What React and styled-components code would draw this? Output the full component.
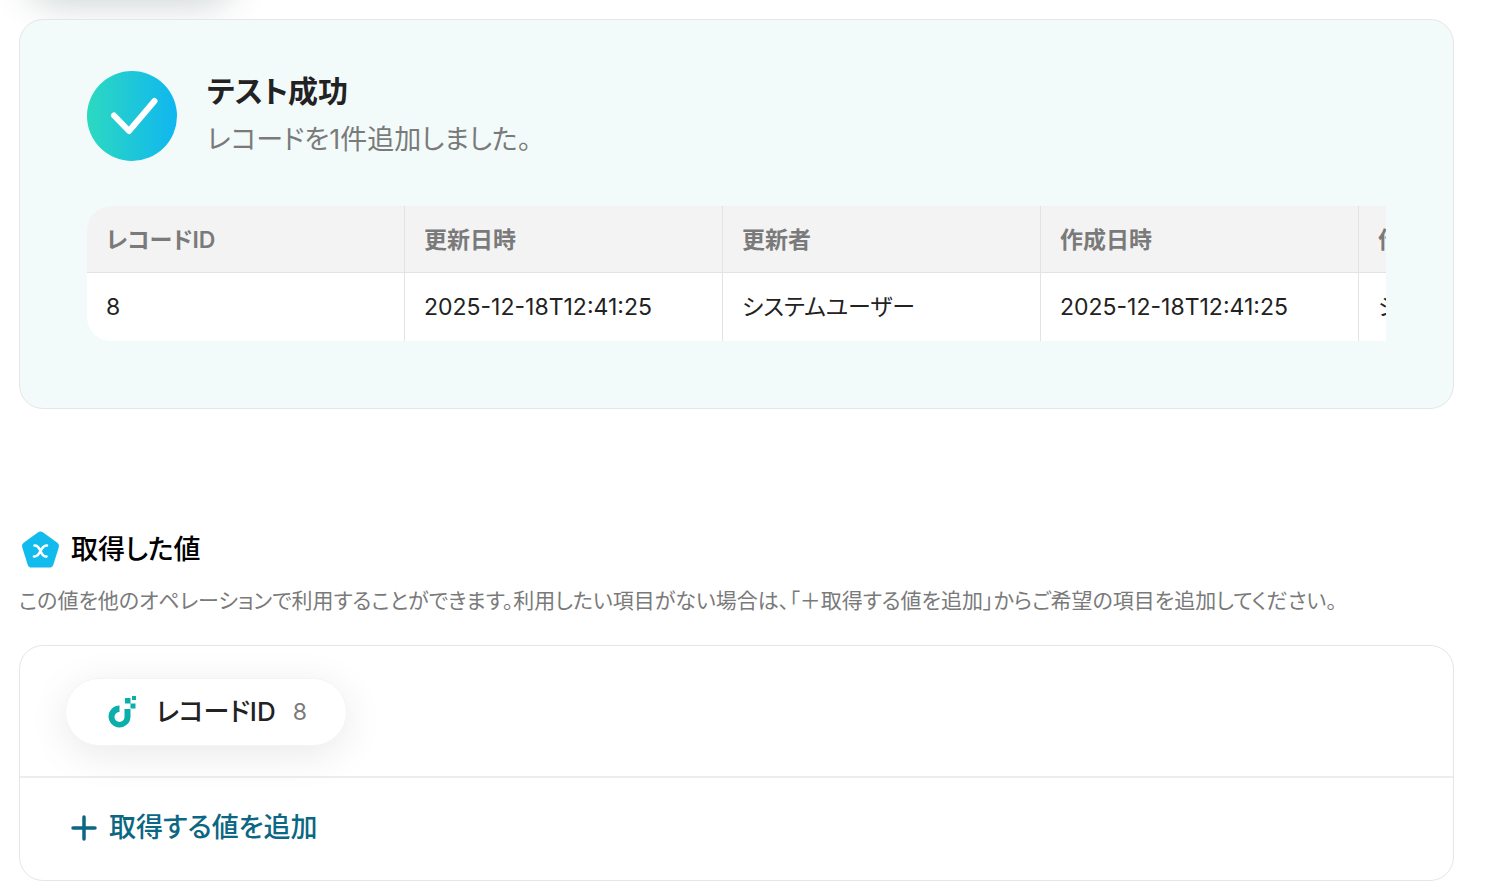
import React from 'react'
import styled, { createGlobalStyle, css } from 'styled-components'

const GlobalStyle = createGlobalStyle`
  *, *::before {
    box-sizing: border-box;
  }
  body {
    margin: 0;
    background: #fff;
    color: #222;
    font-family: Inter, "Noto Sans CJK JP", sans-serif;
    font-feature-settings: "palt";
    -webkit-font-smoothing: antialiased;
    overflow-x: hidden;
  }
`

const Page = styled.main`
  position: relative;
  overflow: hidden;
  padding: 19px 32px 12px 19px;
  /* pill scrolled off above the result card */
  &::before {
    content: '';
    position: absolute;
    top: -68px;
    left: 26px;
    width: 208px;
    height: 64px;
    border-radius: 32px;
    box-shadow: 0 8px 36px rgba(40, 70, 76, 0.24);
  }
`

const card = css`
  border: 1px solid #e6e6e6;
  border-radius: 24px;
`

const Result = styled.section`
  ${card}
  position: relative;
  padding: 47px 67px 67px;
  background: #f2fbfa;
`

const Status = styled.header`
  display: flex;
  align-items: center;
  gap: 30px;
  margin-bottom: 41px;
`

const StatusIcon = styled.svg`
  flex: none;
  width: 90px;
  height: 90px;
`

const Title = styled.h2`
  margin: 0;
  font-size: 30px;
  line-height: 48px;
  font-weight: 600;
`

const Message = styled.p`
  margin: 0;
  font-size: 27px;
  line-height: 50px;
  color: #7a7a7a;
`

const Scroller = styled.div`
  overflow: hidden;
  border-radius: 24px 0 0 24px;
`

const Table = styled.table`
  width: 1590px;
  table-layout: fixed;
  border-spacing: 0;
  background: #fff;
  font-size: 23px;
  line-height: 32px;
  text-align: left;
  white-space: nowrap;
  th, td {
    padding: 18px 19px;
    border-right: 1px solid #e3e3e3;
  }
  th {
    padding: 18px 19px 16px;
    background: #f3f3f3;
    border-bottom: 1px solid #e3e3e3;
    color: #7a7a7a;
    font-weight: 600;
  }
`

const Values = styled.section`
  margin-top: 121px;
`

const Heading = styled.h3`
  display: flex;
  align-items: center;
  gap: 10px;
  margin: 0;
  padding-left: 2px;
  font-size: 27px;
  line-height: 40px;
  font-weight: 500;
  color: #000;
`

const Description = styled.p`
  margin: 15px 0 28px;
  font-size: 21px;
  line-height: 32px;
  color: #7a7a7a;
`

const Panel = styled.div`
  ${card}
  overflow: hidden;
`

const Chips = styled.div`
  display: flex;
  padding: 32px 45px 30px;
  border-bottom: 2px solid #ededed;
`

const Chip = styled.button`
  display: flex;
  align-items: center;
  height: 68px;
  padding: 0 39px 0 42px;
  border: 1px solid #f4f4f4;
  border-radius: 34px;
  background: #fff;
  box-shadow: 0 8px 40px rgba(0, 0, 0, 0.09);
  color: #222;
  font: inherit;
  font-size: 26px;
  line-height: 40px;
  font-weight: 500;
  font-feature-settings: inherit;
  svg {
    margin-right: 20px;
  }
`

const ChipValue = styled.span`
  margin-left: 17px;
  font-size: 23px;
  font-weight: 400;
  color: #7a7a7a;
`

const AddButton = styled.button`
  display: flex;
  align-items: center;
  gap: 12px;
  padding: 30px 51px 32px;
  border: none;
  background: none;
  color: #0b6783;
  font: inherit;
  font-size: 27px;
  line-height: 40px;
  font-weight: 500;
  font-feature-settings: inherit;
`

const CheckIcon = () => (
  <StatusIcon viewBox='0 0 90 90' aria-hidden='true'>
    <defs>
      <linearGradient id='status' x1='0' x2='1' y1='0' y2='0'>
        <stop offset='0' stopColor='#2cd9c0' />
        <stop offset='1' stopColor='#10b6f0' />
      </linearGradient>
    </defs>
    <circle cx='45' cy='45' r='45' fill='url(#status)' />
    <path d='M27 44.500 L42 60 L67.500 30' fill='none' stroke='#fff' strokeWidth='6' strokeLinecap='round' strokeLinejoin='round' />
  </StatusIcon>
)

const ValueIcon = () => (
  <svg width='40' height='40' viewBox='0 0 40 40' aria-hidden='true'>
    <path d='M19.500 5.500 L34 16 L28.500 33.500 L10.500 33.500 L5 16 Z' fill='#12bbee' stroke='#12bbee' strokeWidth='8' strokeLinejoin='round' />
    <path d='M13.500 15.500 C17 15 18 18 19.500 21 C21 24 22 27 25.500 26.500 M26 15.500 C22.500 15 21 18 19.500 21 C18 24 16.500 27 13 26.500' fill='none' stroke='#fff' strokeWidth='2.600' strokeLinecap='round' />
  </svg>
)

const RecordIcon = () => (
  <svg width='28' height='34' viewBox='0 0 28 34' fill='#0aafab' aria-hidden='true'>
    <path d='M11.500 10.500 V17 A5 5 0 1 0 16.500 22 V14 H22.500 V22 A11 11 0 1 1 11.500 10.500 Z' />
    <path d='M17 3 h5.500 v5.500 h-5.500 Z M22.500 8.500 h5 v5 h-5 Z M24 1 h4 v4 h-4 Z' />
  </svg>
)

const PlusIcon = () => (
  <svg width='26' height='26' viewBox='0 0 26 26' aria-hidden='true'>
    <path d='M13 2 V24 M2 13 H24' stroke='currentColor' strokeWidth='3.500' strokeLinecap='round' />
  </svg>
)

const columns = [
  ['レコードID', '8'],
  ['更新日時', '2025-12-18T12:41:25'],
  ['更新者', 'システムユーザー'],
  ['作成日時', '2025-12-18T12:41:25'],
  ['作成者', 'システムユーザー'],
]

export default () => (
  <Page lang='ja'>
    <GlobalStyle />
    <Result>
      <Status>
        <CheckIcon />
        <div>
          <Title>テスト成功</Title>
          <Message>レコードを1件追加しました。</Message>
        </div>
      </Status>
      <Scroller>
        <Table>
          <thead>
            <tr>{columns.map(([name]) => <th key={name} scope='col'>{name}</th>)}</tr>
          </thead>
          <tbody>
            <tr>{columns.map(([name, value]) => <td key={name}>{value}</td>)}</tr>
          </tbody>
        </Table>
      </Scroller>
    </Result>
    <Values>
      <Heading><ValueIcon />取得した値</Heading>
      <Description>
        この値を他のオペレーションで利用することができます。利用したい項目がない場合は、「＋取得する値を追加」からご希望の項目を追加してください。
      </Description>
      <Panel>
        <Chips>
          <Chip type='button'>
            <RecordIcon />
            レコードID
            <ChipValue>8</ChipValue>
          </Chip>
        </Chips>
        <AddButton type='button'><PlusIcon />取得する値を追加</AddButton>
      </Panel>
    </Values>
  </Page>
)
